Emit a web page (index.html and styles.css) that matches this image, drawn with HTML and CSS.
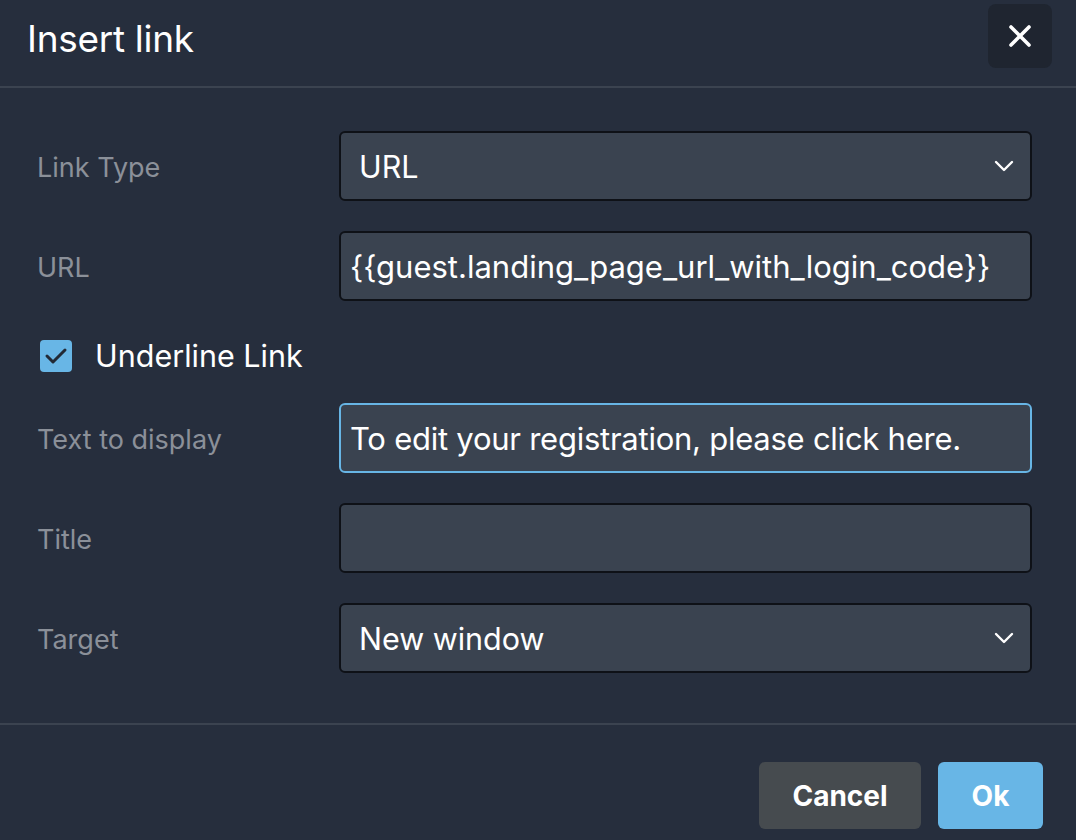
FILE: index.html
```html
<!DOCTYPE html>
<html>
<head>
<meta charset="utf-8">
<link rel="stylesheet" href="styles.css">
</head>
<body>
<div class="dialog">
  <div class="header">
    <h1 class="title">Insert link</h1>
    <button class="close" aria-label="Close">
      <svg width="24" height="24" viewBox="0 0 24 24"><path d="M3 3L21 21M21 3L3 21" stroke="#fff" stroke-width="3.6" stroke-linecap="round"/></svg>
    </button>
  </div>
  <div class="body">
    <div class="row">
      <div class="label">Link Type</div>
      <div class="field select"><span class="val">URL</span>
        <svg class="chev" width="20" height="12" viewBox="0 0 20 12"><path d="M2 2L10 10L18 2" fill="none" stroke="#fff" stroke-width="2.4" stroke-linecap="round" stroke-linejoin="round"/></svg>
      </div>
    </div>
    <div class="row">
      <div class="label">URL</div>
      <div class="field input"><span class="val">{{guest.landing_page_url_with_login_code}}</span></div>
    </div>
    <div class="check-row">
      <span class="checkbox">
        <svg width="24" height="20" viewBox="0 0 24 20"><path d="M3 10L9 16L21 4" fill="none" stroke="#222a36" stroke-width="3" stroke-linecap="round" stroke-linejoin="round"/></svg>
      </span>
      <span class="check-label">Underline Link</span>
    </div>
    <div class="row">
      <div class="label">Text to display</div>
      <div class="field input focus"><span class="val tight">To edit your registration, please click here.</span></div>
    </div>
    <div class="row">
      <div class="label">Title</div>
      <div class="field input"><span class="val"></span></div>
    </div>
    <div class="row">
      <div class="label">Target</div>
      <div class="field select"><span class="val">New window</span>
        <svg class="chev" width="20" height="12" viewBox="0 0 20 12"><path d="M2 2L10 10L18 2" fill="none" stroke="#fff" stroke-width="2.4" stroke-linecap="round" stroke-linejoin="round"/></svg>
      </div>
    </div>
  </div>
  <div class="footer">
    <button class="btn cancel">Cancel</button>
    <button class="btn ok">Ok</button>
  </div>
</div>
</body>
</html>
```
FILE: styles.css
```css
html, body {
  margin: 0;
  padding: 0;
  background: #262e3d;
}
body {
  width: 1076px;
  height: 840px;
  font-family: Inter, "Noto Sans", sans-serif;
  color: #fff;
  overflow: hidden;
}
.dialog {
  display: flex;
  flex-direction: column;
  height: 840px;
}
.header {
  height: 86px;
  flex: none;
  border-bottom: 2px solid #3b4350;
  display: flex;
  align-items: flex-start;
  justify-content: space-between;
  padding: 0 24px 0 27px;
}
.title {
  margin: 0;
  font-size: 37px;
  font-weight: 400;
  line-height: 1;
  padding-top: 20px;
  letter-spacing: -0.3px;
}
.close {
  margin-top: 4px;
  width: 64px;
  height: 64px;
  border: none;
  border-radius: 8px;
  background: #1f2530;
  display: flex;
  align-items: center;
  justify-content: center;
  padding: 0;
}
.body {
  flex: none;
  padding: 43px 44px 0 37px;
  height: 637px;
  box-sizing: border-box;
  border-bottom: 2px solid #3b4350;
  display: flex;
  flex-direction: column;
  gap: 30px;
}
.row {
  display: flex;
  align-items: center;
  height: 70px;
  flex: none;
}
.label {
  width: 302px;
  flex: none;
  font-size: 27px;
  color: #8b9099;
  padding-top: 2px;
}
.field {
  flex: 1;
  height: 70px;
  box-sizing: border-box;
  background: #3a4350;
  border: 2px solid #0e1117;
  border-radius: 6px;
  display: flex;
  align-items: center;
  justify-content: space-between;
  font-size: 31px;
}
.field.select { padding: 0 16px 0 18px; font-size: 30.5px; }
.field.input { padding: 0 9px; }
.field.focus { border-color: #67b5e5; }
.tight { letter-spacing: -0.25px; }
.chev { flex: none; }
.check-row {
  display: flex;
  align-items: flex-start;
  height: 42px;
  flex: none;
  box-sizing: border-box;
  padding: 9px 0 0 3px;
  gap: 23px;
}
.checkbox {
  width: 32px;
  height: 32px;
  border-radius: 4px;
  background: #68b6e6;
  display: flex;
  align-items: center;
  justify-content: center;
}
.check-label {
  font-size: 30.5px;
  line-height: 32px;
  color: #fff;
}
.footer {
  flex: 1;
  display: flex;
  justify-content: flex-end;
  align-items: flex-start;
  gap: 17px;
  padding: 37px 33px 0 0;
}
.btn {
  height: 67px;
  border: none;
  border-radius: 6px;
  font-family: Inter, "Noto Sans", sans-serif;
  font-weight: 700;
  font-size: 28px;
  color: #fff;
}
.cancel {
  width: 162px;
  background: #464b4f;
}
.ok {
  width: 105px;
  background: #68b6e6;
}
```
